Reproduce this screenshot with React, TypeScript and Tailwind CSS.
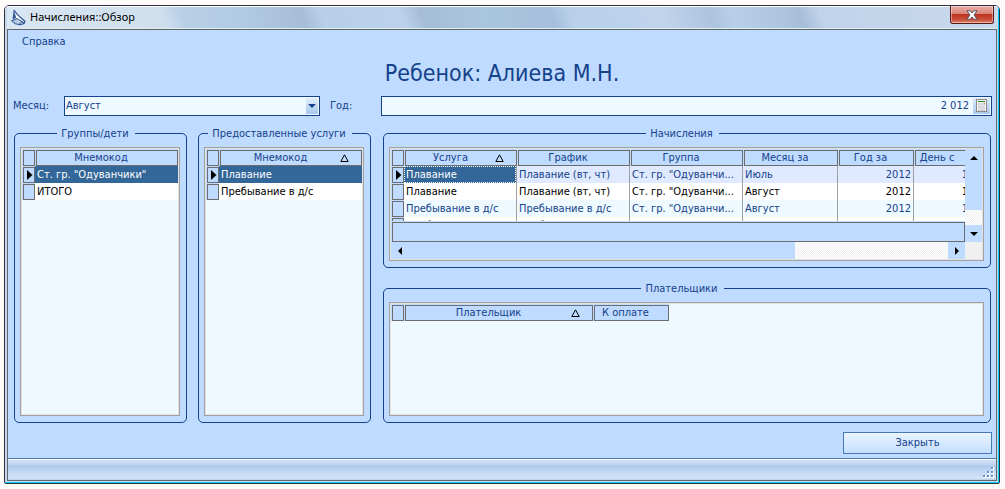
import type { ReactNode } from 'react'
import clsx from 'clsx'

type Column = { title: string; width?: string; sorted?: boolean; right?: boolean }

const CHARGE_COLUMNS: Column[] = [
  { title: 'Услуга', width: 'w-[113px]', sorted: true },
  { title: 'График', width: 'w-[113px]' },
  { title: 'Группа', width: 'w-[113px]' },
  { title: 'Месяц за', width: 'w-[95px]' },
  { title: 'Год за', width: 'w-[76px]', right: true },
  { title: 'День с', width: 'w-[57px]', right: true },
]

const CHARGES = [
  ['Плавание', 'Плавание (вт, чт)', 'Ст. гр. "Одуванчи...', 'Июль', '2012', '1'],
  ['Плавание', 'Плавание (вт, чт)', 'Ст. гр. "Одуванчи...', 'Август', '2012', '1'],
  ['Пребывание в д/с', 'Пребывание в д/с', 'Ст. гр. "Одуванчи...', 'Август', '2012', '1'],
  ['Пребывание в д/с', 'Пребывание в д/с', 'Ст. гр. "Одуванчи...', 'Август', '2012', '1'],
]

const CHARGE_ROW_STYLES = ['bg-[#dfe9ff]', 'bg-white text-black', 'bg-[#eefaff]', 'bg-white text-black']

function AppIcon() {
  return (
    <svg width="15" height="17" viewBox="0 0 15 17" fill="none">
      <path d="M3 1.2 L13.8 12.2 L7 10.5 L2 11 Z" fill="#fff" />
      <path d="M2.6 1 L1.6 10.8 L5.2 8.6 Z" fill="#2f5597" />
      <path d="M3 1 C5 5 9 8 14 12.4 L13 14.2 L9.5 12" stroke="#2a4f93" strokeWidth="1.2" />
      <path d="M0.5 11.8 L6 9.4 L11 12.6 L8 15.6 L4 14.8 Z" fill="#9fb4d4" stroke="#2f5597" strokeWidth="0.9" />
      <path d="M4 12.2 L8 14 M6 11.2 L9 13" stroke="#e8eef8" strokeWidth="0.8" />
      <path d="M8 15.8 L13.5 14.5" stroke="#2f5597" strokeWidth="1.2" />
    </svg>
  )
}

function CloseGlyph() {
  return (
    <svg width="12" height="10" viewBox="0 0 12 10">
      <path
        d="M1 0.8 H4.2 L6 3 L7.8 0.8 H11 L8 5 L11 9.2 H7.8 L6 7 L4.2 9.2 H1 L4 5 Z"
        fill="#fff"
        stroke="#4f5467"
        strokeWidth="1"
      />
    </svg>
  )
}

function CalcIcon() {
  return (
    <svg width="12" height="14" viewBox="0 0 12 14" shapeRendering="crispEdges">
      <rect x="0.5" y="0.5" width="10" height="12" fill="#f4f4f4" stroke="#8b8b8b" />
      <rect x="2" y="2" width="7" height="1" fill="#1b8a1b" />
      <rect x="2" y="4" width="7" height="8" fill="#d5d5dd" />
      <path d="M2 6.5 H9 M2 9.5 H9" stroke="#e4e4ea" strokeWidth="1" />
      <rect x="8" y="4" width="1" height="1" fill="#e07a5a" />
    </svg>
  )
}

const ARROWS = {
  up: 'M4 2 L8 6 H0 Z',
  down: 'M0 2 H8 L4 6 Z',
  left: 'M2 4 L6 0 V8 Z',
  right: 'M2 0 L6 4 L2 8 Z',
}

function Arrow({ dir }: { dir: keyof typeof ARROWS }) {
  return (
    <svg width="8" height="8" viewBox="0 0 8 8">
      <path d={ARROWS[dir]} fill="currentColor" />
    </svg>
  )
}

function SortMark() {
  return (
    <svg width="9" height="8" viewBox="0 0 9 8" fill="none" className="shrink-0">
      <path d="M4.5 0.8 L8.2 7.5 H0.8 Z" stroke="#000" />
    </svg>
  )
}

function Indicator({ active }: { active?: boolean }) {
  return (
    <td className="bg-[#bfdbff] p-0">
      <div className="mt-px ml-px flex h-4 w-3 items-center border border-[#6d6d6d] pl-[3px]">
        {active && (
          <svg width="6" height="10" viewBox="0 0 6 10">
            <path d="M0 0 L5.5 5 L0 10 Z" fill="#000" />
          </svg>
        )}
      </div>
    </td>
  )
}

function DataTable({ label, columns, className, children }: {
  label: string
  columns: Column[]
  className: string
  children?: ReactNode
}) {
  return (
    <table aria-label={label} className={clsx('table-fixed border-separate border-spacing-0', className)}>
      <colgroup>
        <col className="w-[13px]" />
        {columns.map((c) => (
          <col key={c.title} className={c.width} />
        ))}
      </colgroup>
      <thead>
        <tr>
          <th className="bg-[#bfdbff] p-0">
            <div className="mt-px ml-px h-4 w-3 border border-[#6d6d6d]" />
          </th>
          {columns.map((c) => (
            <th key={c.title} className="bg-[#bfdbff] p-0 font-normal">
              <div className="mt-px ml-px flex h-4 items-center border border-[#6d6d6d] pr-3 leading-4">
                <span className="flex-1 text-center whitespace-nowrap">{c.title}</span>
                {c.sorted && <SortMark />}
              </div>
            </th>
          ))}
        </tr>
      </thead>
      <tbody>{children}</tbody>
    </table>
  )
}

function Group({ title, className, children }: { title: string; className?: string; children: ReactNode }) {
  return (
    <fieldset className={clsx('min-w-0 rounded-[5px] border border-[#15428b] pt-1.5 pr-3.5 pb-1.5 pl-[5px]', className)}>
      <legend className="mx-auto pr-1.5 pl-1 leading-[15px] whitespace-nowrap">{title}</legend>
      <div className="-mr-2 border border-[#a0a0a0]">
        <div className="border border-[#e3e3e3] bg-[#eefaff]">{children}</div>
      </div>
    </fieldset>
  )
}

function CodeRow({ text, active }: { text: string; active?: boolean }) {
  return (
    <tr className="h-[17px]">
      <Indicator active={active} />
      <td className={clsx('py-0 pr-0 pl-0.5 leading-[17px]', active ? 'bg-[#336699] text-white' : 'bg-white text-black')}>
        {text}
      </td>
    </tr>
  )
}

const TRACK = 'bg-[#f0f0f0] bg-[repeating-conic-gradient(#fff_0_25%,#f0f0f0_0_50%)] bg-size-[2px_2px]'

export default function App() {
  return (
    <div className="min-h-screen overflow-hidden bg-[#fffbfb] font-['DejaVu_Sans_Condensed','Noto_Sans',sans-serif] text-[11px] text-[#15428b]">
      <div className="mt-[5px] mr-[5px] mb-[5px] ml-1 overflow-hidden rounded-t-[5px] rounded-b-[2px] border border-[#2b2f3f]">
        <div className="border-t border-r border-b border-t-white border-r-[#00d0f5] border-b-[#00d0f5] bg-[#c8d9ec] pr-px pb-px pl-0.5">
          {/* Title bar */}
          <header className="flex h-[22px] items-center border-b border-[#dcebf0] bg-[linear-gradient(70deg,#d9e6f3_0%,#cfdfee_16%,#b9cfe6_18%,#b0cbe2_24%,#a7bdd6_30%,#b8cfe9_32%,#bdd2ea_40%,#a5bdd6_42%,#aac6de_48%,#a6bfdb_55%,#b8d0e9_57%,#c0d4ec_66%,#aec3dd_71%,#b8cfe8_73%,#adc6de_78%,#a8bdd8_80%,#bfd3ea_82%,#cad9ec_100%)] pr-[3px] pl-1">
            <AppIcon />
            <h1 className="ml-1 flex-1 font-['Noto_Sans',sans-serif] text-[11px] text-black">Начисления::Обзор</h1>
            <button
              type="button"
              aria-label="Закрыть окно"
              className="-mt-px flex h-[18px] w-11 items-center justify-center self-start rounded-b-[3px] border border-t-0 border-[#5a1a1a] bg-[linear-gradient(#eab0a8_0%,#d98478_45%,#bd3520_50%,#c9503a_80%,#e08a70_100%)] shadow-[inset_0_0_0_1px_#ffffff66]"
            >
              <CloseGlyph />
            </button>
          </header>

          <main className="border border-[#5f6670] bg-[#bfdbff]">
            <nav className="flex h-6 items-center pl-3.5">
              <a href="#help">Справка</a>
            </nav>
            <h2 className="text-center text-[23px] leading-[38px]">Ребенок: Алиева М.Н.</h2>

            {/* Period */}
            <form className="mt-1 flex h-5 items-center pr-1 pl-[5px]">
              <label htmlFor="month" className="w-[51px]">Месяц:</label>
              <div className="relative w-64">
                <select
                  id="month"
                  defaultValue="Август"
                  className="block h-5 w-full appearance-none border border-[#15428b] bg-[#eefaff] pr-4 pl-px"
                >
                  <option>Июль</option>
                  <option>Август</option>
                </select>
                <span className="pointer-events-none absolute inset-y-0.5 right-0.5 flex w-3 items-center justify-center bg-linear-to-b from-[#e3effc] to-[#a9c9ee]">
                  <Arrow dir="down" />
                </span>
              </div>
              <label htmlFor="year" className="ml-2.5 w-[51px]">Год:</label>
              <div className="flex h-5 flex-1 items-center border border-[#15428b] bg-[#eefaff] pr-px">
                <input id="year" type="text" defaultValue="2 012" className="min-w-0 flex-1 text-right outline-none" />
                <button
                  type="button"
                  aria-label="Калькулятор"
                  className="ml-1 flex h-4 w-[17px] items-center justify-center bg-linear-to-b from-[#dcebfb] to-[#a9c9ee]"
                >
                  <CalcIcon />
                </button>
              </div>
            </form>

            <div className="mt-2.5 flex pr-[5px] pl-1.5">
              <Group title="Группы/дети" className="mr-[11px] w-[173px]">
                <div className="h-[265px]">
                  <DataTable label="Группы/дети" columns={[{ title: 'Мнемокод' }]} className="w-full">
                    <CodeRow text={'Ст. гр. "Одуванчики"'} active />
                    <CodeRow text="ИТОГО" />
                  </DataTable>
                </div>
              </Group>

              <Group title="Предоставленные услуги" className="mr-3 w-[173px]">
                <div className="h-[265px]">
                  <DataTable label="Предоставленные услуги" columns={[{ title: 'Мнемокод', sorted: true }]} className="w-full">
                    <CodeRow text="Плавание" active />
                    <CodeRow text="Пребывание в д/с" />
                  </DataTable>
                </div>
              </Group>

              <div className="flex min-w-0 flex-1 flex-col gap-[13px]">
                <Group title="Начисления">
                  <div className="flex h-[110px] bg-[#bfdbff]">
                    <div className="flex min-w-0 flex-1 flex-col">
                      <div className="h-[72px] overflow-hidden">
                        <DataTable label="Начисления" columns={CHARGE_COLUMNS} className="w-[580px]">
                          {CHARGES.map((row, i) => (
                            <tr key={i} className={clsx('h-[17px]', CHARGE_ROW_STYLES[i])}>
                              <Indicator active={i === 0} />
                              {row.map((text, j) => (
                                <td
                                  key={j}
                                  className={clsx(
                                    'border-r border-[#a0a0a0] p-0 leading-[17px] whitespace-nowrap',
                                    CHARGE_COLUMNS[j].right && 'text-right',
                                    i === 0 && j === 0 && 'bg-[#336699] text-white',
                                  )}
                                >
                                  {i === 0 && j === 0 ? (
                                    <div className="border border-dotted border-white pl-px leading-[15px]">{text}</div>
                                  ) : (
                                    <div className="px-0.5">{text}</div>
                                  )}
                                </td>
                              ))}
                            </tr>
                          ))}
                        </DataTable>
                      </div>
                      <div className="mt-px ml-px h-5 border border-[#6d6d6d]" />
                      <div className="flex h-[17px] text-black">
                        <button type="button" aria-label="Влево" className="flex w-[17px] items-center justify-center">
                          <Arrow dir="left" />
                        </button>
                        <div className="flex-1" />
                        <div className={clsx('w-[153px]', TRACK)} />
                        <button type="button" aria-label="Вправо" className="flex w-[17px] items-center justify-center">
                          <Arrow dir="right" />
                        </button>
                      </div>
                    </div>
                    <div className="flex w-[17px] flex-col text-black">
                      <button type="button" aria-label="Вверх" className="flex h-[17px] items-center justify-center">
                        <Arrow dir="up" />
                      </button>
                      <div className="flex-1" />
                      <div className={clsx('h-[15px]', TRACK)} />
                      <button type="button" aria-label="Вниз" className="flex h-[17px] items-center justify-center">
                        <Arrow dir="down" />
                      </button>
                      <div className="h-[17px] bg-[#f0f0f0]" />
                    </div>
                  </div>
                </Group>

                <Group title="Плательщики">
                  <div className="h-[110px]">
                    <DataTable
                      label="Плательщики"
                      columns={[
                        { title: 'Плательщик', width: 'w-[189px]', sorted: true },
                        { title: 'К оплате', width: 'w-[76px]' },
                      ]}
                      className="w-[278px]"
                    />
                  </div>
                </Group>
              </div>
            </div>

            <div className="mt-[9px] mb-1 flex justify-end pr-1">
              <button
                type="button"
                className="h-[22px] w-[149px] border border-[#4a7ab5] bg-linear-to-b from-[#eaf5ff] to-[#c3deff]"
              >
                Закрыть
              </button>
            </div>

            {/* Status bar */}
            <footer className="border-t border-[#4a7ab5]">
              <div className="flex h-[21px] items-end justify-end border-t border-white bg-[linear-gradient(#cfe0f5_0%,#c0d6f1_25%,#adcaec_28%,#c2d8f2_60%,#d6e4f6_90%,#b9cfe8_100%)] pr-0.5 pb-0.5">
                <svg width="12" height="12" viewBox="0 0 12 12" shapeRendering="crispEdges">
                  <path d="M9 1h3v3h-3z M5 5h3v3h-3z M9 5h3v3h-3z M1 9h3v3h-3z M5 9h3v3h-3z M9 9h3v3h-3z" fill="#fff" />
                  <path d="M9 1h2v2h-2z M5 5h2v2h-2z M9 5h2v2h-2z M1 9h2v2h-2z M5 9h2v2h-2z M9 9h2v2h-2z" fill="#6690cb" />
                </svg>
              </div>
            </footer>
          </main>
        </div>
      </div>
    </div>
  )
}
